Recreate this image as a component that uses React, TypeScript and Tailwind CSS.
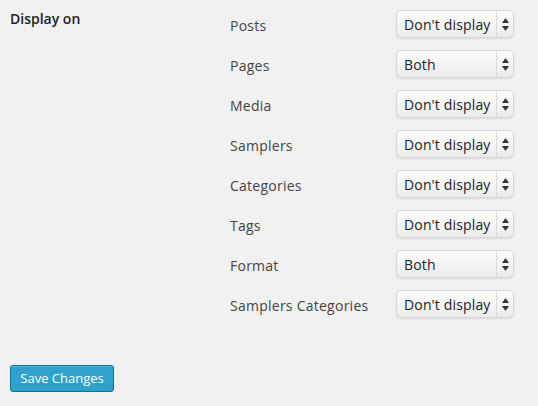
import React from "react";

const rows: [string, string][] = [
  ["Posts", "Don't display"],
  ["Pages", "Both"],
  ["Media", "Don't display"],
  ["Samplers", "Don't display"],
  ["Categories", "Don't display"],
  ["Tags", "Don't display"],
  ["Format", "Both"],
  ["Samplers Categories", "Don't display"],
];

function FakeSelect({ value }: { value: string }) {
  return (
    <div className="flex h-[28px] w-[118px] items-stretch rounded-[5px] border border-[#d6d6d6] bg-gradient-to-b from-[#ffffff] to-[#ebebeb] shadow-[0_1px_2px_rgba(0,0,0,0.1)]">
      <div className="flex flex-1 items-center pl-[7px] text-[14px] tracking-[0.15px] text-[#222] whitespace-nowrap overflow-hidden">
        {value}
      </div>
      <div className="flex w-[17px] items-center justify-center border-l border-[#dadada]">
        <svg width="7" height="13" viewBox="0 0 7 13">
          <polygon points="3.5,0 7,5 0,5" fill="#333" />
          <polygon points="0,8 7,8 3.5,13" fill="#333" />
        </svg>
      </div>
    </div>
  );
}

export default function App() {
  return (
    <div
      className="w-[538px] h-[406px] bg-[#f1f1f1] overflow-hidden"
      style={{ fontFamily: '"Open Sans", "Noto Sans", sans-serif' }}
    >
      <div className="flex pl-[10px]">
        <div className="w-[220px] pt-[8px] text-[14px] font-semibold text-[#222]">
          Display on
        </div>
        <div className="flex flex-col pt-[4px]">
          {rows.map(([label, value]) => (
            <div key={label} className="flex h-[40px] items-center">
              <div className="w-[166px] text-[14px] tracking-[0.25px] text-[#444] pt-[2px]">{label}</div>
              <FakeSelect value={value} />
            </div>
          ))}
        </div>
      </div>
      <div className="pl-[10px] pt-[41px]">
        <button className="h-[27px] w-[104px] rounded-[3px] border border-[#0074a2] bg-[#2ea2cc] text-[13px] text-white shadow-[inset_0_1px_0_rgba(120,200,230,0.5)]">
          Save Changes
        </button>
      </div>
    </div>
  );
}
